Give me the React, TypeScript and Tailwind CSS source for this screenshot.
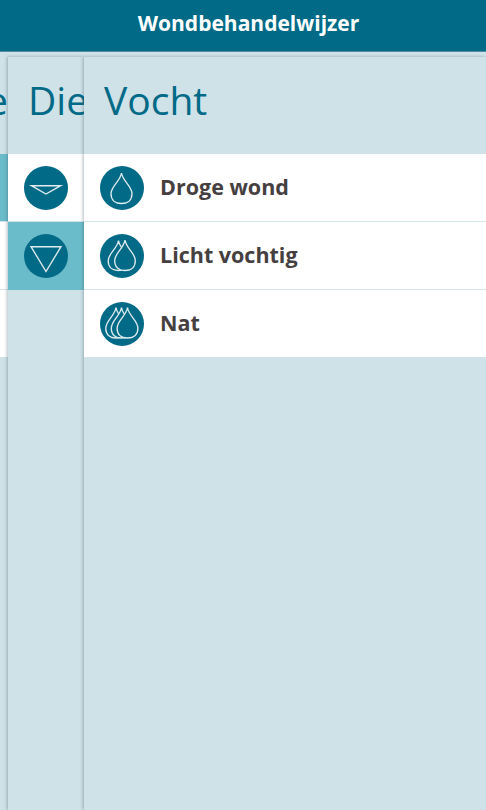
import React from 'react';

const font = { fontFamily: '"Open Sans", "Noto Sans", sans-serif' };

// teardrop outline: x centre, t tip, b bottom, w half width
const Drop = ({ x, t = 7, b = 37.5, w = 10.5 }: { x: number; t?: number; b?: number; w?: number }) => {
  const h = b - t;
  const mid = t + h * 0.68;
  return (
    <path
      d={`M${x} ${t} C${x + 1.2} ${t + h * 0.28} ${x + w} ${t + h * 0.42} ${x + w} ${mid} C${x + w} ${b - 3} ${x + w * 0.55} ${b} ${x} ${b} C${x - w * 0.55} ${b} ${x - w} ${b - 3} ${x - w} ${mid} C${x - w} ${t + h * 0.42} ${x - 1.2} ${t + h * 0.28} ${x} ${t} Z`}
      fill="#006a87"
      stroke="#dfecef"
      strokeWidth="1.35"
    />
  );
};

const Circle = ({ children }: { children: React.ReactNode }) => (
  <svg width="44" height="44" viewBox="0 0 44 44" className="block shrink-0">
    <circle cx="22" cy="22" r="22" fill="#006a87" />
    {children}
  </svg>
);

const moisture = [
  {
    label: 'Droge wond',
    icon: <Drop x={21.5} />,
  },
  {
    label: 'Licht vochtig',
    icon: (
      <>
        <Drop x={18.5} t={6.5} b={36.5} w={10.3} />
        <Drop x={25} t={6} b={36.5} w={10.3} />
      </>
    ),
  },
  {
    label: 'Nat',
    icon: (
      <>
        <Drop x={16} t={5.5} b={36} w={10.2} />
        <Drop x={21.5} t={5.5} b={36} w={10.2} />
        <Drop x={27.5} t={5.5} b={36} w={10.4} />
      </>
    ),
  },
];

export default function App() {
  return (
    <div className="w-[486px] h-[810px] overflow-hidden flex flex-col bg-[#cfe2e8]" style={font}>
      <header className="h-[52px] shrink-0 bg-[#006a87] border-b border-[#4d8ea3] flex items-center justify-center pl-[11px]">
        <h1 className="text-[21px] font-bold text-white mt-[-4px]">Wondbehandelwijzer</h1>
      </header>

      <div className="flex flex-1 min-h-0 pt-[5px]">
        {/* clipped first panel */}
        <div className="w-[8px] shrink-0 overflow-hidden">
          <div className="h-[97px] flex items-center justify-end">
            <span className="text-[39px] leading-none text-[#006a87] mt-[-13px]">e</span>
          </div>
          <div className="h-[68px] bg-[#6bbccb] border-b border-[#d5e6ea]" />
          <div className="h-[68px] bg-white border-b border-[#d5e6ea]" />
          <div className="h-[67px] bg-white" />
        </div>

        {/* second panel */}
        <div className="w-[76px] shrink-0 overflow-hidden shadow-[-1px_0_3px_rgba(60,90,100,0.4)] z-10 bg-[#cfe2e8]">
          <div className="h-[97px] flex items-center pl-[20px]">
            <span className="text-[39px] leading-none text-[#006a87] whitespace-nowrap mt-[-13px]">Die</span>
          </div>
          <div className="h-[68px] bg-white border-b border-[#d5e6ea] flex items-center pl-[16px]">
            <Circle>
              <path d="M7.4 19.7 H36.7 L22 28 Z" fill="none" stroke="#dfecef" strokeWidth="1.35" />
            </Circle>
          </div>
          <div className="h-[68px] bg-[#6bbccb] flex items-center pl-[16px]">
            <Circle>
              <path d="M7 12.7 H37 L22 37.5 Z" fill="none" stroke="#dfecef" strokeWidth="1.35" />
            </Circle>
          </div>
        </div>

        {/* active panel */}
        <div className="flex-1 min-w-0 shadow-[-1px_0_3px_rgba(60,90,100,0.4)] z-20 bg-[#cfe2e8]">
          <div className="h-[97px] flex items-center pl-[20px]">
            <span className="text-[39px] leading-none text-[#006a87] mt-[-13px]">Vocht</span>
          </div>
          {moisture.map((m, i) => (
            <div
              key={m.label}
              className={`bg-white flex items-center pl-[16px] gap-[16px] ${i < 2 ? 'h-[68px] border-b border-[#d5e6ea]' : 'h-[67px]'}`}
            >
              <Circle>{m.icon}</Circle>
              <span className="text-[21.5px] font-bold text-[#45403f]">{m.label}</span>
            </div>
          ))}
        </div>
      </div>
    </div>
  );
}
